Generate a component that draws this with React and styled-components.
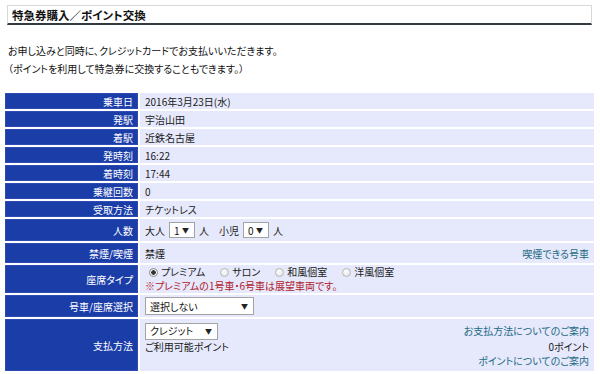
import React from "react";
import styled, { createGlobalStyle } from "styled-components";

const Global = createGlobalStyle`
  html, body { margin: 0; padding: 0; background: #fff; }
  body {
    font-family: "Noto Sans CJK JP", "Noto Sans", sans-serif;
    font-size: 10px;
    color: #1a1a1a;
    font-feature-settings: "palt";
  }
`;

const Page = styled.div`
  width: 600px;
  height: 374px;
  overflow: hidden;
  padding: 5px 6px 0 5px;
  box-sizing: border-box;
`;

const TitleBox = styled.div`
  margin: 0 2px 0 2px;
  height: 20px;
  box-sizing: border-box;
  border: 1px solid #d8d8d8;
  border-bottom: 2px solid #343b40;
  display: flex;
  align-items: center;
  padding-left: 4px;
  font-size: 11.5px;
  font-weight: bold;
  color: #111;
`;

const Intro = styled.div`
  margin: 17px 0 0 3px;
  line-height: 18px;
  font-size: 10px;
  color: #111;
`;

const Grid = styled.div`
  margin-top: 15px;
  display: grid;
  grid-template-columns: 133px 1fr;
  column-gap: 2px;
  row-gap: 2px;
`;

const Head = styled.div`
  background: #1b3da8;
  color: #fff;
  height: ${(p) => p.$h}px;
  display: flex;
  align-items: center;
  justify-content: flex-end;
  padding-right: 5px;
  box-sizing: border-box;
  box-shadow: inset 0 0 0 1px #2c4cb4;
`;

const Cell = styled.div`
  background: #e6e9fb;
  height: ${(p) => p.$h}px;
  display: flex;
  align-items: center;
  padding: 0 5px 0 5px;
  box-sizing: border-box;
  gap: 4px;
`;

const Stack = styled.div`
  background: #e6e9fb;
  height: ${(p) => p.$h}px;
  display: flex;
  flex-direction: column;
  justify-content: center;
  padding: 0 5px;
  box-sizing: border-box;
  line-height: 14px;
`;

const Spacer = styled.div`
  flex: 1;
`;

const Link = styled.span`
  color: #1e6a86;
`;

const Note = styled.div`
  color: #b0202c;
`;

const Select = styled.span`
  display: inline-flex;
  align-items: center;
  justify-content: space-between;
  width: ${(p) => p.$w}px;
  height: ${(p) => p.$hh || 15}px;
  box-sizing: border-box;
  background: #fff;
  border: 1px solid #a3a3a3;
  padding: 0 5px 0 4px;
  color: #111;
  font-size: 10px;
`;

const Arrow = styled.span`
  font-size: 7px;
  color: #222;
`;

const RadioRow = styled.div`
  display: flex;
  align-items: center;
  gap: 15px;
  padding-left: 4px;
`;

const RadioLabel = styled.span`
  display: inline-flex;
  align-items: center;
  gap: 3px;
`;

const Dot = styled.span`
  width: 9px;
  height: 9px;
  border-radius: 50%;
  box-sizing: border-box;
  border: 1px solid ${(p) => (p.$on ? "#8a8a8a" : "#b8b8b8")};
  background: ${(p) =>
    p.$on
      ? "radial-gradient(circle, #333 0 2px, #f4f4f4 2.5px)"
      : "radial-gradient(circle at 40% 35%, #fff, #dcdcdc)"};
`;

const PayTop = styled.div`
  display: flex;
  align-items: center;
  justify-content: space-between;
`;

const Line = styled.div`
  display: flex;
  justify-content: space-between;
`;

function Radio({ on, children }) {
  return (
    <RadioLabel>
      <Dot $on={on} />
      {children}
    </RadioLabel>
  );
}

const rows = [
  ["乗車日", 16, "2016年3月23日(水)"],
  ["発駅", 16, "宇治山田"],
  ["着駅", 16, "近鉄名古屋"],
  ["発時刻", 16, "16:22"],
  ["着時刻", 16, "17:44"],
  ["乗継回数", 16, "0"],
  ["受取方法", 16, "チケットレス"],
];

export default function App() {
  return (
    <>
      <Global />
      <Page>
        <TitleBox>特急券購入／ポイント交換</TitleBox>
        <Intro>
          お申し込みと同時に、クレジットカードでお支払いいただきます。
          <br />
          （ポイントを利用して特急券に交換することもできます。）
        </Intro>
        <Grid>
          {rows.map(([h, ht, v]) => (
            <React.Fragment key={h}>
              <Head $h={ht}>{h}</Head>
              <Cell $h={ht}>{v}</Cell>
            </React.Fragment>
          ))}
          <Head $h={22}>人数</Head>
          <Cell $h={22}>
            大人
            <Select $w={26} $hh={16}>
              1<Arrow>▼</Arrow>
            </Select>
            人　小児
            <Select $w={26} $hh={16}>
              0<Arrow>▼</Arrow>
            </Select>
            人
          </Cell>
          <Head $h={20}>禁煙/喫煙</Head>
          <Cell $h={20}>
            禁煙
            <Spacer />
            <Link>喫煙できる号車</Link>
          </Cell>
          <Head $h={28}>座席タイプ</Head>
          <Stack $h={28}>
            <RadioRow>
              <Radio on>プレミアム</Radio>
              <Radio>サロン</Radio>
              <Radio>和風個室</Radio>
              <Radio>洋風個室</Radio>
            </RadioRow>
            <Note>※プレミアムの1号車・6号車は展望車両です。</Note>
          </Stack>
          <Head $h={22}>号車/座席選択</Head>
          <Cell $h={22}>
            <Select $w={109} $hh={18}>
              選択しない<Arrow>▼</Arrow>
            </Select>
          </Cell>
          <Head $h={52}>支払方法</Head>
          <Stack $h={52}>
            <PayTop>
              <Select $w={73} $hh={17}>
                クレジット<Arrow>▼</Arrow>
              </Select>
              <Link>お支払方法についてのご案内</Link>
            </PayTop>
            <Line>
              <span>ご利用可能ポイント</span>
              <span>0ポイント</span>
            </Line>
            <Line>
              <span />
              <Link>ポイントについてのご案内</Link>
            </Line>
          </Stack>
        </Grid>
      </Page>
    </>
  );
}
